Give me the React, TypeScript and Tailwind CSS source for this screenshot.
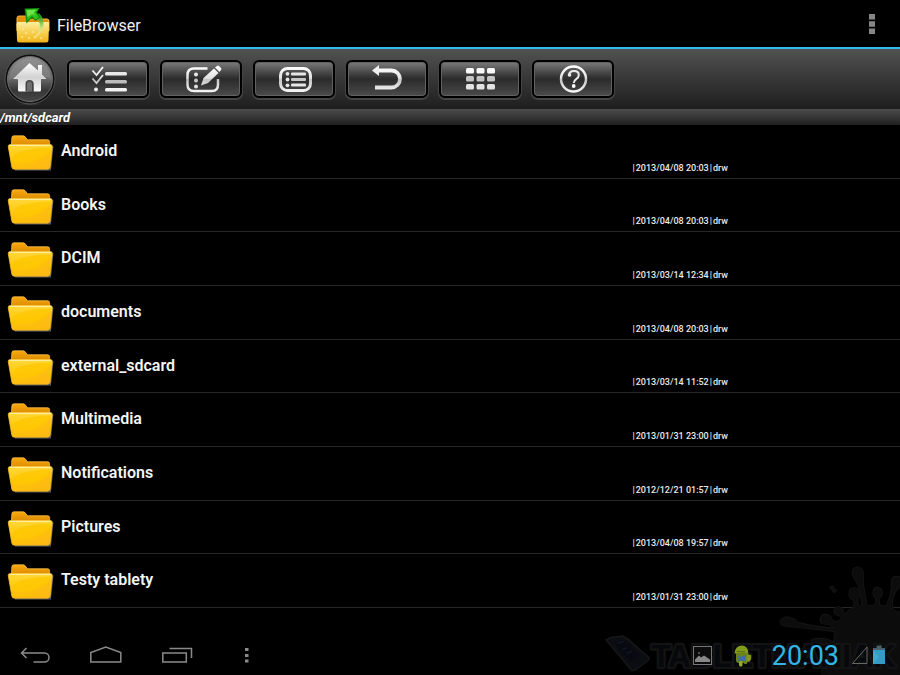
import clsx from 'clsx';
import React from 'react';

type Entry = {
  name: string;
  modified: string;
};

const ENTRIES: Entry[] = [
  { name: 'Android', modified: '2013/04/08 20:03' },
  { name: 'Books', modified: '2013/04/08 20:03' },
  { name: 'DCIM', modified: '2013/03/14 12:34' },
  { name: 'documents', modified: '2013/04/08 20:03' },
  { name: 'external_sdcard', modified: '2013/03/14 11:52' },
  { name: 'Multimedia', modified: '2013/01/31 23:00' },
  { name: 'Notifications', modified: '2012/12/21 01:57' },
  { name: 'Pictures', modified: '2013/04/08 19:57' },
  { name: 'Testy tablety', modified: '2013/01/31 23:00' },
];

// gradients shared by every icon on the page
const Gradients = () => (
  <svg className="absolute size-0" aria-hidden="true">
    <defs>
      <linearGradient id="metal" gradientUnits="userSpaceOnUse" x1="0" y1="4" x2="0" y2="29">
        <stop offset="0" stopColor="#fff" />
        <stop offset="0.45" stopColor="#e0e0e0" />
        <stop offset="0.5" stopColor="#c4c4c4" />
        <stop offset="1" stopColor="#f6f6f6" />
      </linearGradient>
      <linearGradient id="folderBack" x1="0" y1="0" x2="0" y2="1">
        <stop offset="0" stopColor="#f9a70c" />
        <stop offset="1" stopColor="#d98a00" />
      </linearGradient>
      <linearGradient id="folderFront" x1="0" y1="0" x2="0" y2="1">
        <stop offset="0" stopColor="#ffd83c" />
        <stop offset="0.5" stopColor="#ffcb12" />
        <stop offset="1" stopColor="#f9b418" />
      </linearGradient>
      <linearGradient id="folderShine" x1="0" y1="0" x2="1" y2="0">
        <stop offset="0" stopColor="#ffc400" />
        <stop offset="1" stopColor="#fdb913" />
      </linearGradient>
      <linearGradient id="appFront" x1="0" y1="0" x2="0" y2="1">
        <stop offset="0" stopColor="#fdeea0" />
        <stop offset="0.5" stopColor="#f7cf52" />
        <stop offset="1" stopColor="#f2b418" />
      </linearGradient>
      <linearGradient id="appArrow" x1="0" y1="0" x2="0" y2="1">
        <stop offset="0" stopColor="#13920c" />
        <stop offset="0.35" stopColor="#5fc043" stopOpacity="0.9" />
        <stop offset="0.6" stopColor="#c5e68a" stopOpacity="0.7" />
        <stop offset="1" stopColor="#fff6c0" stopOpacity="0.5" />
      </linearGradient>
      <linearGradient id="house" x1="0" y1="0" x2="0" y2="1">
        <stop offset="0" stopColor="#fff" />
        <stop offset="0.5" stopColor="#d2d2d2" />
        <stop offset="1" stopColor="#fafafa" />
      </linearGradient>
      <radialGradient id="homeGlow" cx="0.5" cy="1" r="0.5">
        <stop offset="0" stopColor="#b0b0b0" />
        <stop offset="1" stopColor="#555" stopOpacity="0" />
      </radialGradient>
      <linearGradient id="homeBall" x1="0" y1="0" x2="0" y2="1">
        <stop offset="0" stopColor="#8c8c8c" />
        <stop offset="0.5" stopColor="#666" />
        <stop offset="0.75" stopColor="#363636" />
        <stop offset="1" stopColor="#484848" />
      </linearGradient>
    </defs>
  </svg>
);

const AppIcon = () => (
  <svg className="h-10 w-[38px]" viewBox="0 0 38 40" aria-hidden="true">
    <path d="M3 14q0-2 2-2h8l3 3h17q2 0 2 2v10H3z" fill="#e08e0c" stroke="#f7b83c" />
    <path d="M3.500 18h31v4h-31z" fill="#fbe7b0" />
    <path d="M2.500 20q0-2 2-2h28.500q2 0 2 2l-.5 16q0 2.500-2.500 2.500H5.500q-2.500 0-2.500-2.500z" fill="url(#appFront)" />
    <g fill="#fff3b8" opacity="0.5">
      <circle cx="8" cy="33" r="1.200" />
      <circle cx="12" cy="29" r="1.200" />
      <circle cx="15" cy="34" r="1.200" />
      <circle cx="19" cy="28" r="1.200" />
      <circle cx="21" cy="33" r="1.200" />
      <circle cx="27" cy="34" r="1.200" />
      <circle cx="9" cy="25" r="1.200" />
    </g>
    <path d="M21 13q7 5 4 13-2 6-6 9 9-4 10.500-13 .5-8-4.500-13z" fill="url(#appArrow)" />
    <path d="M10.500 4.500 25.500 4l-2.500 4.500 3.500 4.500-5 4-3.500-3.500-5.500 6z" fill="#0f8a0a" />
    <path d="M12 5.500 24 5l-2.500 3.500 3.500 4.500-3.500 2.500-3.500-3.500-4.500 4.500z" fill="#2fc41a" />
    <path d="M12.500 6l9.500-.3-2.500 3 2 2.300-3.500-1-4.500 3z" fill="#7dee5a" opacity="0.8" />
  </svg>
);

const FolderIcon = () => (
  <svg className="h-[42px] w-[49px] shrink-0" viewBox="0 0 50 42" aria-hidden="true">
    <path d="M9 38.300h36.300l2.500-24" fill="none" stroke="#5d6168" strokeWidth="1.200" />
    <path
      d="M5.500 14 6 5.500Q6 3.500 8 3.500h9.500q1.500 0 2.500 1.500l2 2.500h20.500q2 0 2 2V14z"
      fill="url(#folderBack)"
      stroke="#fbc04a"
      strokeWidth="0.8"
    />
    <path
      d="M2.300 14.500Q2 12.500 4 12.500h41.500q2 0 1.700 2l-2.200 21q-.3 2-2.500 2h-34q-2.200 0-2.500-2z"
      fill="url(#folderFront)"
      stroke="#fcc021"
      strokeWidth="0.8"
    />
    <path d="M6.500 31q8 4 19-1 10-6 20.500-12l-1.700 16.500q-.3 2-2.300 2h-33q-1.800 0-2-2z" fill="url(#folderShine)" opacity="0.75" />
    <path d="M6 30q-1-8 12-11.500 13-3 28-3-2 10-19 14.500-12 3.500-21 0z" fill="#ffc700" opacity="0.75" />
    <path d="M3.500 13.300h42.500" stroke="#ffef9c" strokeWidth="1.200" />
  </svg>
);

const HomeIcon = () => (
  <svg className="size-[52px]" viewBox="0 0 52 52" aria-hidden="true">
    <circle cx="26" cy="26" r="25" fill="#0e0e0e" stroke="#505050" />
    <circle cx="26" cy="26" r="22.500" fill="url(#homeBall)" stroke="#6e6e6e" />
    <ellipse cx="26" cy="47" rx="15" ry="12" fill="url(#homeGlow)" opacity="0.7" />
    <path d="M5 27a21 21 0 0 1 42 0q-3-5-8-1-13 5-26 1-5-3-8 0z" fill="#aaa" opacity="0.25" />
    <path
      d="M25.500 10 9 26h5v11q0 1.500 1.500 1.500h8V31q0-3 3-3t3 3v7.500h6q1.500 0 1.500-1.500V26h5.500L38 21.500V12h-4v5.500z"
      fill="url(#house)"
    />
    <path d="M21.500 38.500V31q0-4 4-4t4 4v7.500z" fill="#454545" />
    <path d="M23 38.500V31q0-2.500 2.500-2.500T28 31v7.500z" fill="#6e6e6e" />
  </svg>
);

const ChecklistIcon = () => (
  <g fill="none" stroke="url(#metal)">
    <path d="M6.500 7.500l4 4.500L17 4M6.500 15.500l4 4.500 6.500-8" strokeWidth="1.800" />
    <g fill="#e8e8e8" stroke="none">
      <rect x="19" y="9" width="22" height="3.500" rx="1.500" />
      <rect x="19" y="17" width="22" height="3.500" rx="1.500" fill="#bcbcbc" />
      <rect x="19" y="25" width="22" height="3.500" rx="1.500" fill="#f2f2f2" />
      <circle cx="10" cy="26.500" r="2" />
    </g>
  </g>
);

const EditIcon = () => (
  <g fill="url(#metal)">
    <path
      d="M28.500 5.500H15Q8.500 5.500 8.500 12v9.500q0 6.500 6.500 6.500h18q6 0 6-6.500V16"
      fill="none"
      stroke="url(#metal)"
      strokeWidth="2.500"
    />
    <circle cx="17" cy="11.500" r="2" />
    <circle cx="17" cy="17.500" r="2" />
    <circle cx="17" cy="23.500" r="2" />
    <path d="M22 22.500l2.500-7.500L35 5.500l4.500 4.500L29 20z" />
    <path d="M36 4.500l2-1.500q1-.8 2 0l2 2q1 1 0 2l-1.500 2z" />
  </g>
);

const ListIcon = () => (
  <g fill="#e6e6e6">
    <rect x="8.500" y="5.500" width="30" height="22" rx="7" fill="none" stroke="url(#metal)" strokeWidth="3" />
    <circle cx="15.500" cy="10.800" r="1.900" />
    <circle cx="15.500" cy="16.500" r="1.900" />
    <circle cx="15.500" cy="22.300" r="1.900" />
    <rect x="19" y="9.500" width="15" height="3" rx="1" />
    <rect x="19" y="15" width="15" height="3" rx="1" fill="#c8c8c8" />
    <rect x="19" y="20.500" width="15" height="3" rx="1" />
  </g>
);

const BackIcon = () => (
  <g fill="none" stroke="url(#metal)" strokeWidth="3.800">
    <path d="M12 7.500h14.500a8.500 8.500 0 0 1 0 17H10" />
    <path d="M7 7.500l7-5.500v11z" fill="#f0f0f0" stroke="none" />
  </g>
);

const GridIcon = () => (
  <g>
    {[8, 18.5, 29].map((x) => (
      <g key={x}>
        <rect x={x} y="5" width="8" height="5.500" rx="1.500" fill="#fafafa" />
        <rect x={x} y="13" width="8" height="5.500" rx="1.500" fill="#c4c4c4" />
        <rect x={x} y="21" width="8" height="5.500" rx="1.500" fill="#e2e2e2" />
      </g>
    ))}
  </g>
);

const HelpIcon = () => (
  <g>
    <circle cx="22.500" cy="16" r="12.500" fill="none" stroke="url(#metal)" strokeWidth="2.500" />
    <path
      d="M18 12.500q0-4.500 5-4.500 4.800 0 4.800 4 0 2.500-2.600 4.200-2.400 1.600-2.400 3.800"
      fill="none"
      stroke="#eaeaea"
      strokeWidth="2"
    />
    <circle cx="18.500" cy="12" r="1.800" fill="#eaeaea" />
    <circle cx="22.700" cy="23" r="1.900" fill="#fff" />
  </g>
);

const TOOLS = [
  { label: 'Select', Icon: ChecklistIcon },
  { label: 'Edit', Icon: EditIcon },
  { label: 'List', Icon: ListIcon },
  { label: 'Up', Icon: BackIcon },
  { label: 'Grid', Icon: GridIcon },
  { label: 'Help', Icon: HelpIcon },
];

const Toolbar = () => (
  <nav className="flex h-[60px] items-center gap-[11px] bg-linear-to-b from-[#525252] to-[#1e1e1e] px-1">
    <button aria-label="Home">
      <HomeIcon />
    </button>
    {TOOLS.map(({ label, Icon }) => (
      <button
        key={label}
        aria-label={label}
        className={clsx(
          'flex h-[38px] w-[82px] items-center justify-center rounded-md border-2 border-black',
          'bg-linear-to-b from-[#7c7c7c] via-[#2b2b2b] to-[#4b4b4b]',
          'shadow-[0_1px_0_1px_#444444,inset_0_0_0_1px_#626262]',
        )}
      >
        <svg className="h-8 w-11" viewBox="0 0 44 32" aria-hidden="true">
          <Icon />
        </svg>
      </button>
    ))}
  </nav>
);

const FileRow = ({ entry }: { entry: Entry }) => (
  <li className="flex border-b border-[#262626] pl-1.5">
    <div className="pt-[7px]">
      <FolderIcon />
    </div>
    <a href="#" className="flex-1 pt-4 pl-1.5 text-base leading-5 font-semibold text-[#f4f4f4]">
      {entry.name}
    </a>
    <span className="mr-[172px] flex gap-px self-end pb-1 text-[9px] leading-3 font-medium text-[#e8e8e8]">
      <span>|</span>
      <span>{entry.modified}</span>
      <span>|</span>
      <span>drw</span>
    </span>
  </li>
);

const Splat = () => (
  <>
    <path d="M900 158Q875 152 862 138Q800 134 768 140Q740 152 728 172Q702 192 704 230Q702 262 688 275V345H900z" />
    <path d="M758 42q0-20 14-20t18 20q-2 16 0 36l10 60h-14q-4-50-16-74-10-10-12-22z" />
    <path d="M748 102q0-18 14-18 16 2 16 18-2 10-6 16 0 14 4 24l-16 8q4-20 2-30-14-4-14-18z" />
    <path d="M820 98q0-14 12-15 14 2 14 15 0 12-10 16 0 14 4 24h-16q6-12 4-24-8-4-8-16z" />
    <path d="M900 82q-14 6-20 26-6 20-2 36l-20-2q14-30 18-60-6-30 12-32l12 2z" />
    <path d="M728 174q-8-8-14-8-12-4-11-14 2-12 14-11 14 2 12 16 4 8 12 8z" />
    <path d="M706 210q-12-20-28-18-18 0-17-15 4-14 18-13 14 4 16 16 10 8 25 4z" />
    <path d="M706 214l-90-10-36-4q-40 0-39-16 4-14 24-12 20 4 28 16 40 12 113 18z" />
    <path d="M704 250q-20-16-50-14-20 0-20 10l50 6 16 20z" />
    <path d="M664 336q2-12 14-12 12 4 10 14l-4 7h-16z" />
    <path d="M691 82l8-2v6l9 6-5 5-6-7z" />
  </>
);

const Watermark = () => (
  <svg
    className="pointer-events-none absolute right-0 bottom-0 h-[115px] w-[300px]"
    viewBox="0 0 900 345"
    aria-hidden="true"
  >
    <g stroke="#151515" strokeWidth="5">
      <Splat />
    </g>
    <g fill="#0c0c0c">
      <Splat />
    </g>
    <path d="M18 240l14-8 36-4 14 8 66 58-4 8-38 28-10 2z" fill="#0c0d10" stroke="#17181a" strokeWidth="4" />
    <path d="M38 247l34-10 52 48-34 24z" fill="#070a11" stroke="#0d1118" strokeWidth="2" />
    <path d="M52 250l20-6M66 268l14-4M78 280l18-6" stroke="#101826" strokeWidth="4" />
    <text
      x="155"
      y="321"
      fill="#06080b"
      stroke="#131313"
      strokeWidth="14"
      strokeLinejoin="round"
      paintOrder="stroke"
      fontSize="93"
      fontWeight="700"
      fontFamily="'Liberation Sans', sans-serif"
    >
      TABLETMANIAK
    </text>
  </svg>
);

const StatusIcons = () => (
  <div className="flex items-center pr-3.5">
    <svg className="mr-5 size-[21px]" viewBox="0 0 21 21" aria-hidden="true">
      <rect x="1.500" y="1.500" width="18" height="18" fill="#0c0c0c" stroke="#777" />
      <path d="M3 17v-2.500l4-4 2 2 3-2 6 4V17z" fill="#888" />
      <circle cx="7" cy="8" r="1" fill="#666" />
    </svg>
    <svg className="mr-5 h-[23px] w-[19px]" viewBox="0 0 19 23" aria-hidden="true">
      <path d="M1.500 9.500Q2 1.500 9.500 1.500 15 2 15.500 9.500z" fill="#839b1d" />
      <path d="M3 9h12v7q0 3-2 3H6q-3 0-3-3z" fill="#6a8219" />
      <rect x="6" y="17" width="3.500" height="5.500" rx="1.500" fill="#99a52c" />
      <rect x="11" y="16" width="3" height="4" rx="1" fill="#758520" />
      <path d="M14 10l4 1q1 5-2 7l-3-1z" fill="#82951f" />
      <path d="M4 11l4 2 5-2-1 3.500 1 3-4-1-4 1 1-3z" fill="#3b6eaa" />
      <path d="M4 7.500l8 .5" stroke="#55660f" />
    </svg>
    <time className="mr-3 pt-0.5 text-[27px] leading-8 font-normal text-[#33b5e5]">20:03</time>
    <svg className="mr-1 h-5 w-[17px]" viewBox="0 0 17 20" aria-hidden="true">
      <path d="M1.500 18.500H16V2z" fill="none" stroke="#666" />
    </svg>
    <svg className="h-5 w-3.5" viewBox="0 0 14 20" aria-hidden="true">
      <path d="M1 3h3.500V.5h5V3H13v2.500H1z" fill="#49616b" />
      <path d="M1 5h12v14H1z" fill="#369bc2" />
      <path d="M1 5l6 7-6 7z" fill="#4fb0d4" opacity="0.6" />
    </svg>
  </div>
);

const SystemBar = () => (
  <footer className="relative mt-auto flex h-10 items-center justify-between pl-5 text-[#8a8a8a]">
    <Watermark />
    <div className="relative flex items-center gap-10">
      <button aria-label="Back">
        <svg className="h-5 w-[30px]" viewBox="0 0 30 20" fill="none" stroke="currentColor" strokeWidth="1.500">
          <path d="M1.500 8H24.500a4.500 4.500 0 0 1 0 9H13.500M6.500 3l-5 5 5 5" />
        </svg>
      </button>
      <button aria-label="Home screen">
        <svg className="h-5 w-8" viewBox="0 0 32 20" fill="none" stroke="currentColor" strokeWidth="1.500">
          <path d="M.8 17V7.500L15.800 2l15 5.500V17z" />
        </svg>
      </button>
      <button aria-label="Recent apps">
        <svg className="h-5 w-[31px]" viewBox="0 0 31 20" fill="none" stroke="currentColor" strokeWidth="1.500">
          <path d="M.8 8h23.500v9H.8zM7.500 3.500H29.500V13" />
        </svg>
      </button>
      <button aria-label="Menu" className="pl-2">
        <svg className="h-5 w-[11px]" viewBox="0 0 11 20" fill="currentColor">
          <path d="M4 3h3.500v3H4zM4 9h3.500v3H4zM4 14.500h3.500v3H4z" />
        </svg>
      </button>
    </div>
    <div className="relative">
      <StatusIcons />
    </div>
  </footer>
);

const App = () => {
  return (
    <div className="flex min-h-screen w-full flex-col bg-black font-[Roboto,sans-serif]">
      <Gradients />
      <header className="flex h-[49px] items-center border-b-2 border-[#2fbcf0] pr-5 pl-3.5">
        <AppIcon />
        <h1 className="flex-1 pt-1 pl-[5px] text-base leading-5 text-[#f0f0f0]">FileBrowser</h1>
        <button aria-label="More options">
          <svg className="h-5 w-4" viewBox="0 0 16 20" fill="#868686">
            <path d="M5 0h6v5.500H5zM5 7.200h6v5.500H5zM5 14.400h6V20H5z" />
          </svg>
        </button>
      </header>
      <Toolbar />
      <p className="h-4 bg-linear-to-b from-[#4d4d4d] to-[#202020] text-[13px] leading-[18px] font-bold text-white italic">
        /mnt/sdcard
      </p>
      <ul className="grid h-[483px] grid-rows-9">
        {ENTRIES.map((entry) => (
          <FileRow key={entry.name} entry={entry} />
        ))}
      </ul>
      <SystemBar />
    </div>
  );
};

export default App;
